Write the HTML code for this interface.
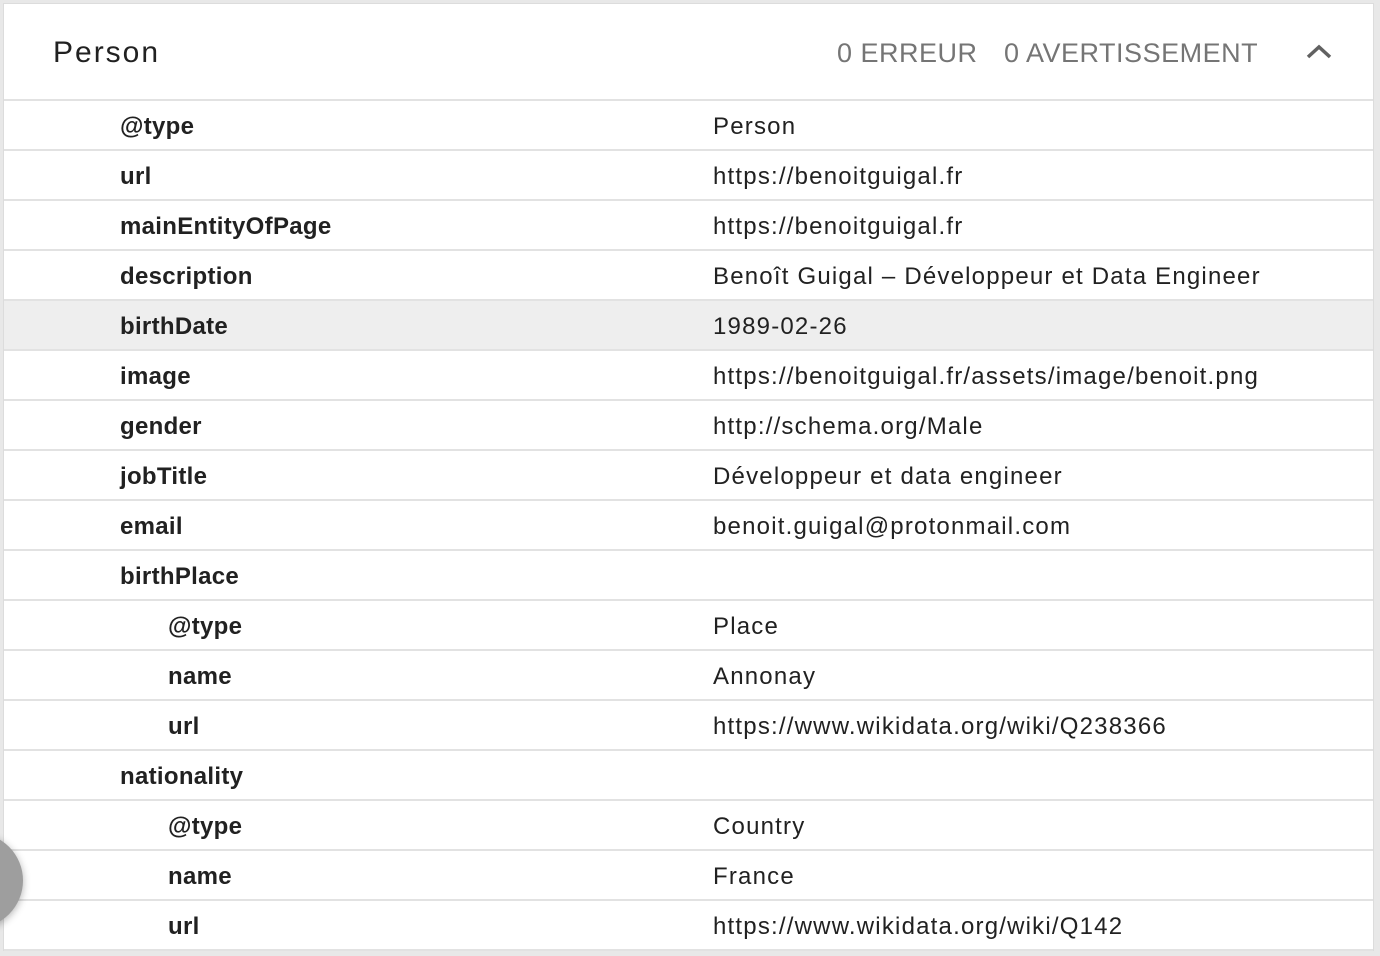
<!DOCTYPE html>
<html><head><style>
body{margin:0;width:1380px;height:956px;background:#e8e8e8;position:relative;overflow:hidden;font-family:"Liberation Sans",Arial,sans-serif;}
.card{position:absolute;left:3px;top:3px;width:1371px;height:948px;background:#fff;border:1px solid #dcdcdc;box-sizing:border-box;}
.hdr{height:95px;border-bottom:2px solid #e2e2e2;position:relative;}
.title{position:absolute;left:49px;top:32px;font-size:30px;color:#212121;letter-spacing:2px;}
.cnt{position:absolute;top:34px;font-size:27px;color:#757575;letter-spacing:0.5px;}
.row{height:48px;border-bottom:2px solid #e2e2e2;position:relative;font-size:24px;color:#212121;}
.row.hl{background:#eee;}
.k{position:absolute;left:116px;top:12px;font-weight:bold;letter-spacing:0.3px;}
.k.n{left:164px;}
.v{position:absolute;left:709px;top:12px;letter-spacing:1.2px;}
.circ{position:absolute;left:-72px;top:833px;width:95px;height:95px;border-radius:50%;background:#9e9e9e;box-shadow:0 2px 8px rgba(0,0,0,.3);}
</style></head><body>
<div class="card">
<div class="hdr"><div class="title">Person</div>
<div class="cnt" style="left:833px">0 ERREUR</div>
<div class="cnt" style="left:1000px">0 AVERTISSEMENT</div>
<svg style="position:absolute;left:1300px;top:37px" width="30" height="20" viewBox="0 0 30 20"><path d="M4 16 L15 6 L26 16" fill="none" stroke="#616161" stroke-width="3.5"/></svg>
</div>
<div class="row"><span class="k">@type</span><span class="v">Person</span></div>
<div class="row"><span class="k">url</span><span class="v">https://benoitguigal.fr</span></div>
<div class="row"><span class="k">mainEntityOfPage</span><span class="v">https://benoitguigal.fr</span></div>
<div class="row"><span class="k">description</span><span class="v">Benoît Guigal – Développeur et Data Engineer</span></div>
<div class="row hl"><span class="k">birthDate</span><span class="v">1989-02-26</span></div>
<div class="row"><span class="k">image</span><span class="v">https://benoitguigal.fr/assets/image/benoit.png</span></div>
<div class="row"><span class="k">gender</span><span class="v">http://schema.org/Male</span></div>
<div class="row"><span class="k">jobTitle</span><span class="v">Développeur et data engineer</span></div>
<div class="row"><span class="k">email</span><span class="v">benoit.guigal@protonmail.com</span></div>
<div class="row"><span class="k">birthPlace</span></div>
<div class="row"><span class="k n">@type</span><span class="v">Place</span></div>
<div class="row"><span class="k n">name</span><span class="v">Annonay</span></div>
<div class="row"><span class="k n">url</span><span class="v">https://www.wikidata.org/wiki/Q238366</span></div>
<div class="row"><span class="k">nationality</span></div>
<div class="row"><span class="k n">@type</span><span class="v">Country</span></div>
<div class="row"><span class="k n">name</span><span class="v">France</span></div>
<div class="row"><span class="k n">url</span><span class="v">https://www.wikidata.org/wiki/Q142</span></div>
</div>
<div class="circ"></div>
</body></html>
